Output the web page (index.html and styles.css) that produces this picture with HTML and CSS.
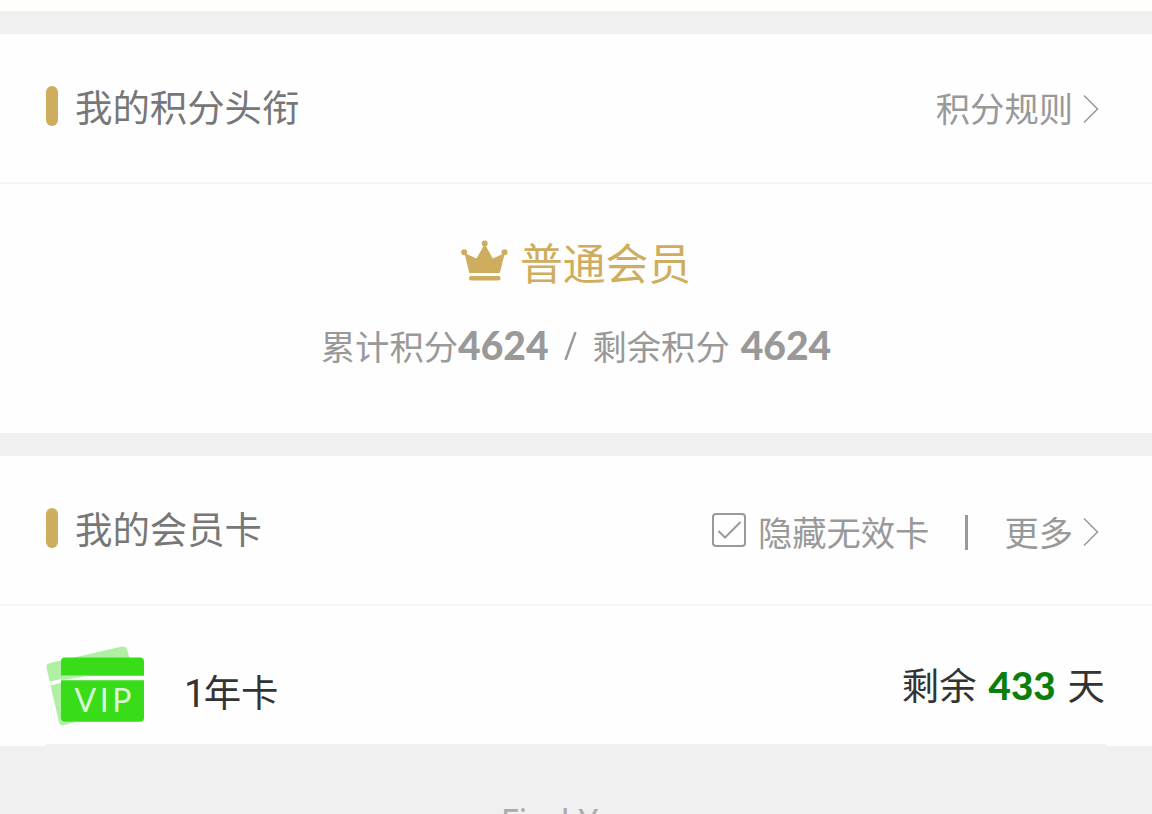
FILE: index.html
```
<!DOCTYPE html>
<html lang="zh-CN">

<head>
    <title>会员中心</title>
    <meta charset="UTF-8">
    <meta name="viewport" content="width=device-width, initial-scale=1.0">
    <link rel="stylesheet" href="styles.css">
</head>

<body>
    <div class="page">
        <!-- 积分头衔 -->
        <section class="panel points">
            <div class="panel-head">
                <h3 class="title">我的积分头衔</h3>
                <a class="link">积分规则<svg class="arrow" viewBox="0 0 16 30"><path d="M1 1.500L14.500 15L1 28.500"/></svg></a>
            </div>
            <div class="level">
                <svg class="crown" viewBox="0 0 48 42">
                    <path d="M3.500 13L15.500 18.500L23.700 4L31.800 18.500L43.800 13L38.800 33H8.300Z"/>
                    <circle cx="3.200" cy="12.200" r="3"/>
                    <circle cx="23.700" cy="3.500" r="3"/>
                    <circle cx="43.500" cy="12.200" r="3"/>
                    <rect x="8" y="36" width="31.500" height="4.500" rx="2"/>
                </svg>
                <span class="level-name">普通会员</span>
            </div>
            <div class="score">
                <span>累计积分</span><b>4624</b><svg class="slash" viewBox="0 0 13 28"><path d="M1.500 28L11.500 0"/></svg><span>剩余积分</span><b class="rest">4624</b>
            </div>
        </section>
        <!-- 会员卡 -->
        <section class="panel cards">
            <div class="panel-head">
                <h3 class="title">我的会员卡</h3>
                <div class="tools">
                    <svg class="check" viewBox="0 0 34 34"><rect x="1" y="1" width="32" height="32" rx="3"/><path d="M6.500 18L13 24.500L28.500 9"/></svg>
                    <span>隐藏无效卡</span>
                    <i class="bar"></i>
                    <a class="link">更多<svg class="arrow" viewBox="0 0 16 30"><path d="M1 1.500L14.500 15L1 28.500"/></svg></a>
                </div>
            </div>
            <div class="card">
                <svg class="vip" viewBox="0 0 100 80">
                    <path class="back" d="M4 16L76 -0.500Q80 -1 81 2L83.500 11H16V32L3.500 34.500L0.500 20Q0 17 4 16Z"/>
                    <path class="back" d="M4.500 38.500L16 35.500V74L30 75L18 78Q14 79 13 75Z"/>
                    <path class="front" d="M19 10.500H94Q98 10.500 98 14.500V28.800H15V14.500Q15 10.500 19 10.500Z"/>
                    <path class="front" d="M15 33.300H98V70.700Q98 74.700 94 74.700H19Q15 74.700 15 70.700Z"/>
                    <path class="back" d="M15 28.800H44L15 33.300Z"/>
                    <text x="28.500" y="65" textLength="57">VIP</text>
                </svg>
                <span class="card-name"><span class="num">1</span>年卡</span>
                <span class="days">剩余<b>433</b>天</span>
            </div>
        </section>
        <footer class="footer">Find Yoga</footer>
    </div>
</body>

</html>
```
FILE: styles.css
```
body,
h3 {
    margin: 0;
}
body{
    background-color: #f0f0f0;
    font-family: "Noto Sans CJK SC", sans-serif;
    color: #999;
    overflow: hidden;
}
i{
    font-style: normal;
}
b{
    font-family: Lato, sans-serif;
    font-weight: 900;
}
.page{
    height: 814px;
    overflow: hidden;
    border-top: 11px solid #fefefd;
    box-sizing: border-box;
}
.panel{
    margin-top: 23px;
    background-color: #fefefe;
}
.points{
    height: 399px;
}
.cards{
    height: 290px;
}
.panel-head{
    display: flex;
    align-items: center;
    justify-content: space-between;
    box-sizing: border-box;
    height: 150px;
    padding: 0 53px 4px 46px;
    border-bottom: 2px solid #f5f5f5;
}
.title{
    display: flex;
    align-items: center;
    font-size: 37.4px;
    line-height: 54px;
    font-weight: 400;
    color: #777;
}
.title::before{
    content: "";
    width: 12px;
    height: 40px;
    margin-right: 17px;
    border-radius: 6px;
    background-color: #cfad5e;
}
.link,
.tools{
    display: flex;
    align-items: center;
    font-size: 34.3px;
    line-height: 50px;
    font-weight: 400;
}
.points .link{
    padding-top: 2px;
}
.tools{
    padding-top: 5px;
}
.arrow{
    width: 16px;
    height: 30px;
    margin: 3px 0 0 10px;
    fill: none;
    stroke: #999;
    stroke-width: 1.5;
}
.check{
    width: 34px;
    height: 34px;
    margin: 0 12px 1px 0;
    fill: none;
    stroke: #999;
    stroke-width: 2;
}
.bar{
    width: 3px;
    height: 35px;
    margin: 3px 36px 0;
    background-color: #999;
}
.level{
    display: flex;
    justify-content: center;
    padding-top: 46px;
    color: #cfad5e;
}
.crown{
    width: 48px;
    height: 42px;
    margin: 10px 11px 0 0;
    fill: #cfad5e;
    overflow: visible;
}
.level-name{
    font-size: 42.8px;
    line-height: 62px;
}
.score{
    display: flex;
    justify-content: center;
    align-items: baseline;
    margin-top: 28px;
    font-size: 34.3px;
    line-height: 50px;
}
.score b{
    font-size: 39px;
}
.slash{
    width: 13px;
    height: 28px;
    margin: 0 16px 0 15px;
    fill: none;
    stroke: #999;
    stroke-width: 2.5;
}
.score .rest{
    margin-left: 11px;
}
.card{
    display: flex;
    box-sizing: border-box;
    height: 140px;
    margin: 0 46px;
    padding-top: 41px;
    border-bottom: 2px solid #f0f0f0;
    font-size: 37.4px;
    line-height: 54px;
    color: #333;
}
.vip{
    width: 100px;
    height: 80px;
    overflow: visible;
}
.vip .back{
    fill: #b0f0a4;
}
.vip .front{
    fill: #38dc18;
}
.vip text{
    fill: #d8f9d1;
    font: 32px Lato, sans-serif;
}
.card-name{
    margin: 17px 0 0 38px;
}
.num{
    font-family: Roboto, sans-serif;
    font-size: 38.5px;
    line-height: 1;
    margin-right: -2px;
}
.days{
    margin: 10px 1px 0 auto;
}
.days b{
    margin: 0 12px;
    font-size: 38.5px;
    color: #0a800a;
}
.footer{
    margin-top: 50px;
    padding-left: 6px;
    text-align: center;
    font-family: "Noto Sans", sans-serif;
    font-size: 34.3px;
    line-height: 50px;
    color: #aaa;
}
```
